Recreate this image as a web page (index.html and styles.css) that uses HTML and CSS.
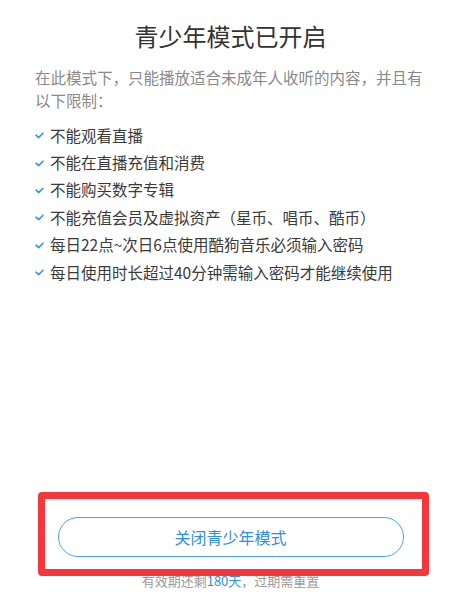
FILE: index.html
```html
<!DOCTYPE html>
<html lang="zh-CN">
<head>
<meta charset="utf-8">
<title>青少年模式</title>
<link rel="stylesheet" href="styles.css">
</head>
<body>
<div class="page">
  <h1 class="title">青少年模式已开启</h1>
  <p class="intro">在此模式下，只能播放适合未成年人收听的内容，并且有以下限制：</p>
  <ul class="rules">
    <li><svg class="check" viewBox="0 0 9 7" width="9" height="7"><polyline points="1,3.2 3.6,5.6 8,1.2"/></svg><span>不能观看直播</span></li>
    <li><svg class="check" viewBox="0 0 9 7" width="9" height="7"><polyline points="1,3.2 3.6,5.6 8,1.2"/></svg><span>不能在直播充值和消费</span></li>
    <li><svg class="check" viewBox="0 0 9 7" width="9" height="7"><polyline points="1,3.2 3.6,5.6 8,1.2"/></svg><span>不能购买数字专辑</span></li>
    <li><svg class="check" viewBox="0 0 9 7" width="9" height="7"><polyline points="1,3.2 3.6,5.6 8,1.2"/></svg><span>不能充值会员及虚拟资产（星币、唱币、酷币）</span></li>
    <li><svg class="check" viewBox="0 0 9 7" width="9" height="7"><polyline points="1,3.2 3.6,5.6 8,1.2"/></svg><span>每日22点~次日6点使用酷狗音乐必须输入密码</span></li>
    <li><svg class="check" viewBox="0 0 9 7" width="9" height="7"><polyline points="1,3.2 3.6,5.6 8,1.2"/></svg><span>每日使用时长超过40分钟需输入密码才能继续使用</span></li>
  </ul>
  <div class="footer">
    <button class="close-btn" type="button">关闭青少年模式</button>
    <p class="expire">有效期还剩<span class="days">180天</span>，过期需重置</p>
    <div class="highlight"></div>
  </div>
</div>
</body>
</html>
```
FILE: styles.css
```css
* { box-sizing: border-box; }
html, body { margin: 0; padding: 0; background: #fff; }
body {
  font-family: "Noto Sans CJK SC", "Noto Sans", "Liberation Sans", sans-serif;
}
.page {
  min-height: 600px;
  display: flex;
  flex-direction: column;
  padding: 20px 35px 0;
}
.title {
  margin: 0;
  font-size: 24px;
  line-height: 32px;
  font-weight: 400;
  color: #333;
  text-align: center;
}
.intro {
  margin: 14px 0 0;
  font-size: 15.5px;
  line-height: 23px;
  color: #8a8a8a;
}
.rules {
  list-style: none;
  margin: 9px 0 0;
  padding: 0;
}
.rules li {
  display: flex;
  align-items: center;
  gap: 6px;
  height: 27.4px;
  font-size: 15.5px;
  color: #3a3a3a;
  white-space: nowrap;
}
.check {
  flex: none;
  margin-top: 2px;
  fill: none;
  stroke: #3797e6;
  stroke-width: 1.6;
  stroke-linecap: round;
  stroke-linejoin: round;
}
.footer {
  margin-top: auto;
  position: relative;
  display: flex;
  flex-direction: column;
  align-items: center;
  padding-bottom: 10px;
}
.close-btn {
  width: 346px;
  height: 40px;
  border: 1px solid #4ba1ea;
  border-radius: 20px;
  background: #fff;
  color: #2f8fe5;
  font-family: inherit;
  font-size: 16px;
  padding: 0;
}
.expire {
  margin: 15px 0 0;
  font-size: 13px;
  line-height: 18px;
  color: #9a9a9a;
}
.days { color: #2f8fe5; }
.highlight {
  position: absolute;
  left: 3px;
  top: -25px;
  width: 391px;
  height: 84px;
  border: 7px solid #f4373a;
  border-radius: 4px;
}
```
